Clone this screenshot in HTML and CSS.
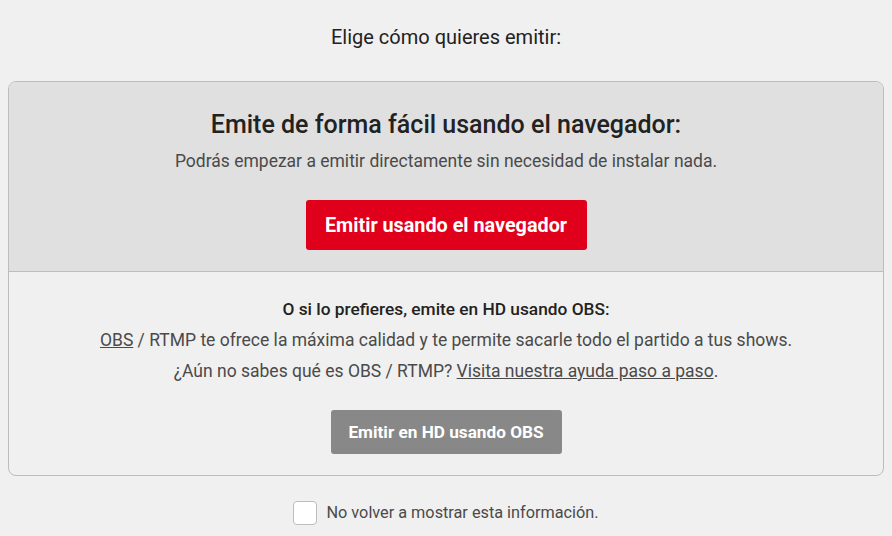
FILE: index.html
```html
<!DOCTYPE html>
<html lang="es">
<head>
<meta charset="utf-8">
<title>Elige cómo quieres emitir</title>
<link rel="stylesheet" href="styles.css">
</head>
<body>
<div class="page">
  <h1 class="title">Elige cómo quieres emitir:</h1>
  <div class="card">
    <section class="card-top">
      <h2 class="card-heading">Emite de forma fácil usando el navegador:</h2>
      <p class="card-sub">Podrás empezar a emitir directamente sin necesidad de instalar nada.</p>
      <button class="btn btn-red" type="button">Emitir usando el navegador</button>
    </section>
    <section class="card-bottom">
      <h3 class="obs-heading">O si lo prefieres, emite en HD usando OBS:</h3>
      <p class="obs-text"><a href="#" class="link">OBS</a> / RTMP te ofrece la máxima calidad y te permite sacarle todo el partido a tus shows.<br>¿Aún no sabes qué es OBS / RTMP? <a href="#" class="link">Visita nuestra ayuda paso a paso</a>.</p>
      <button class="btn btn-gray" type="button">Emitir en HD usando OBS</button>
    </section>
  </div>
  <label class="check-row">
    <span class="check-box"></span>
    <span class="check-label">No volver a mostrar esta información.</span>
  </label>
</div>
</body>
</html>
```
FILE: styles.css
```css
html, body {
  margin: 0;
  padding: 0;
  background: #f0f0f0;
}
body {
  font-family: Roboto, "Liberation Sans", sans-serif;
  color: #444;
}
.page {
  padding: 0 8px;
  display: flex;
  flex-direction: column;
  align-items: stretch;
}
.title {
  margin: 25px 0 0;
  font-size: 20px;
  line-height: 24px;
  font-weight: 400;
  color: #222;
  text-align: center;
}
.card {
  margin-top: 32px;
  border: 1px solid #bdbdbd;
  border-radius: 8px;
  overflow: hidden;
}
.card-top {
  background: #e0e0e0;
  padding: 28px 16px 21px;
  display: flex;
  flex-direction: column;
  align-items: center;
  border-bottom: 1px solid #bdbdbd;
}
.card-heading {
  margin: 0;
  font-size: 25px;
  line-height: 30px;
  font-weight: 500;
  color: #222;
}
.card-sub {
  margin: 9px 0 0;
  font-size: 17.5px;
  line-height: 24px;
  color: #4a4a4a;
}
.btn {
  border: 0;
  color: #fff;
  font-family: Roboto, "Liberation Sans", sans-serif;
  font-weight: 700;
  border-radius: 3px;
  cursor: pointer;
}
.btn-red {
  margin-top: 27px;
  height: 50px;
  width: 281px;
  background: #e0001b;
  font-size: 19.8px;
}
.card-bottom {
  padding: 21px 16px 21px;
  display: flex;
  flex-direction: column;
  align-items: center;
  text-align: center;
}
.obs-heading {
  margin: 0;
  font-size: 17.3px;
  line-height: 32px;
  font-weight: 500;
  color: #222;
}
.obs-text {
  margin: 0;
  font-size: 17.5px;
  line-height: 31px;
  color: #4a4a4a;
}
.link {
  color: #4a4a4a;
  text-decoration: underline;
}
.btn-gray {
  margin-top: 23px;
  height: 44px;
  width: 231px;
  background: #888;
  font-size: 17.2px;
}
.check-row {
  margin-top: 25px;
  align-self: center;
  display: flex;
  align-items: center;
  gap: 9px;
  height: 24px;
}
.check-box {
  width: 22px;
  height: 22px;
  background: #fff;
  border: 1px solid #bdbdbd;
  border-radius: 4px;
}
.check-label {
  font-size: 16.25px;
  line-height: 24px;
  color: #4a4a4a;
}
```
